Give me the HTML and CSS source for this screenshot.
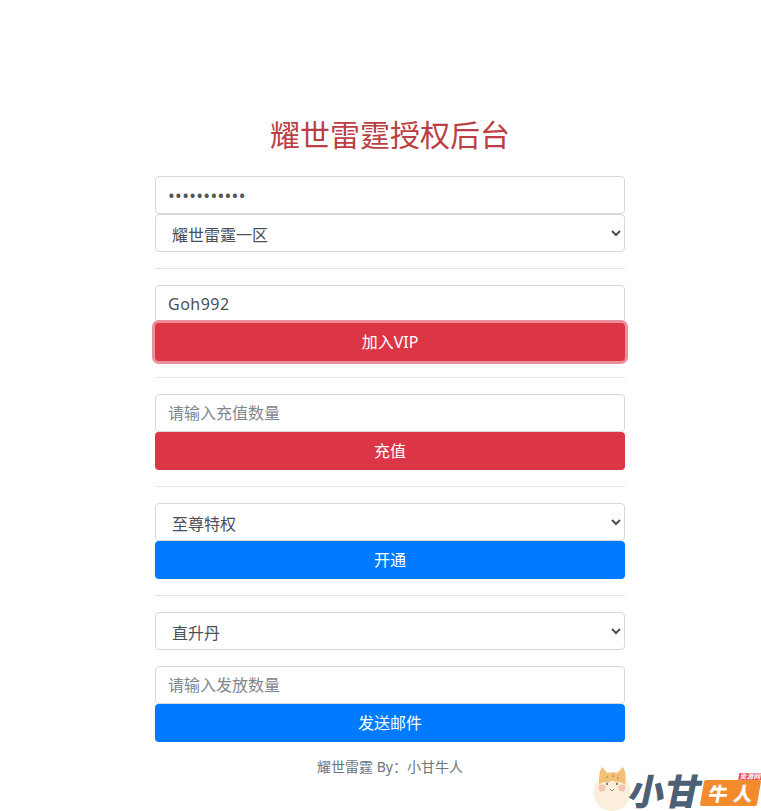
FILE: index.html
```html
<!DOCTYPE html>
<html lang="zh-CN">
<head>
    <meta charset="UTF-8">
    <meta name="viewport" content="width=device-width, initial-scale=1.0">
    <title>耀世雷霆授权后台</title>
    <link rel="stylesheet" href="styles.css">
</head>
<body>
    <div class="container">
        <h3 class="title">耀世雷霆授权后台</h3>
        <input class="form-control input-pass" type="password" value="12345678901">
        <select class="form-control">
            <option>耀世雷霆一区</option>
        </select>
        <hr>
        <input class="form-control input-text" type="text" value="Goh992">
        <button class="btn btn-danger btn-focus">加入VIP</button>
        <hr>
        <input class="form-control" type="text" placeholder="请输入充值数量">
        <button class="btn btn-danger">充值</button>
        <hr>
        <select class="form-control">
            <option>至尊特权</option>
        </select>
        <button class="btn btn-primary">开通</button>
        <hr>
        <select class="form-control">
            <option>直升丹</option>
        </select>
        <div class="spacer"></div>
        <input class="form-control" type="text" placeholder="请输入发放数量">
        <button class="btn btn-primary">发送邮件</button>
        <p class="footer">耀世雷霆 By：小甘牛人</p>
    </div>

    <div class="watermark">
        <svg class="mascot" width="42" height="49" viewBox="0 0 42 49">
            <ellipse cx="20" cy="30" rx="18.5" ry="19" fill="#fbeedb"/>
            <path d="M7 23 C7 15 7 10 10 5 C12 7 14 9 15 11 C18 10 23 10 25 11 C27 9 29 7 31 5 C34 10 34 16 33 23 C30 20 27 19 25 21 C22 18 19 18 16 21 C13 19 10 20 7 23 Z" fill="#f3c078"/>
            <circle cx="15" cy="15" r="1.2" fill="#d9a05c"/>
            <circle cx="21" cy="14" r="1.2" fill="#d9a05c"/>
            <circle cx="26" cy="16" r="1.2" fill="#d9a05c"/>
            <circle cx="10" cy="26" r="3.5" fill="#f6c4b4"/>
            <circle cx="30" cy="26" r="3.5" fill="#f6c4b4"/>
            <circle cx="15" cy="22" r="1" fill="#6b5a4a"/>
            <circle cx="25" cy="22" r="1" fill="#6b5a4a"/>
            <path d="M18 27 L20 29 L22 27" fill="none" stroke="#9a8a7a" stroke-width="1"/>
        </svg>
        <span class="brand">小甘</span>
        <span class="tag">牛人<span class="tag-mini">资源网</span></span>
    </div>
</body>
</html>
```

FILE: styles.css
```css
* {
    box-sizing: border-box;
}
body {
    margin: 0;
    background-color: #fff;
    font-family: "Noto Sans", "Noto Sans CJK SC", sans-serif;
    font-size: 16px;
    color: #212529;
}
.container {
    width: 470px;
    margin-left: 155px;
    padding-top: 112px;
}
.title {
    margin: 0 0 18px;
    font-size: 30px;
    font-weight: 400;
    line-height: 46px;
    text-align: center;
    color: #bb3f45;
}
.form-control {
    display: block;
    width: 100%;
    height: 38px;
    padding: 6px 12px;
    font-family: inherit;
    font-size: 16px;
    color: #495057;
    background-color: #fff;
    border: 1px solid #d4d8dc;
    border-radius: 4px;
    outline: none;
}
select.form-control {
    padding-top: 8px;
    padding-bottom: 4px;
}
.form-control::placeholder {
    color: #80888f;
}
.input-pass {
    font-size: 18px;
    letter-spacing: .3px;
    color: #555;
}
.input-text {
    letter-spacing: .5px;
}
hr {
    height: 1px;
    margin: 16px 0;
    border: 0;
    background-color: #e4e4e4;
}
.btn {
    display: block;
    width: 100%;
    height: 38px;
    padding: 4px 12px 6px;
    font-family: inherit;
    font-size: 16px;
    color: #fff;
    border: 1px solid transparent;
    border-radius: 4px;
}
.btn-danger {
    background-color: #dc3545;
}
.btn-primary {
    background-color: #007bff;
}
.btn-focus {
    box-shadow: 0 0 0 3px #ec8f98;
    position: relative;
}
.spacer {
    height: 16px;
}
.footer {
    margin: 16px 0 0;
    font-size: 14px;
    line-height: 18px;
    text-align: center;
    color: #6c757d;
}
.watermark {
    position: absolute;
    left: 592px;
    top: 762px;
    width: 169px;
    height: 49px;
    display: flex;
    align-items: flex-end;
}
.mascot {
    flex: none;
}
.brand {
    flex: none;
    margin-left: -4px;
    font-family: "Noto Sans CJK SC", sans-serif;
    font-size: 36px;
    font-weight: 900;
    line-height: 44px;
    color: #4d6076;
    transform: skewX(-12deg);
    white-space: nowrap;
}
.tag {
    flex: none;
    position: relative;
    margin-bottom: 5px;
    width: 57px;
    padding-left: 7px;
    font-family: "Noto Sans CJK SC", sans-serif;
    font-size: 19px;
    font-weight: 900;
    line-height: 26px;
    letter-spacing: 6px;
    color: #fff;
    background-color: #f38a2c;
    border-radius: 2px;
    transform: skewX(-10deg);
    white-space: nowrap;
}
.tag-mini {
    position: absolute;
    right: 0;
    top: -7px;
    width: 23px;
    font-size: 7px;
    font-weight: 700;
    line-height: 7px;
    letter-spacing: 0;
    text-align: center;
    background-color: #e8384a;
}
```
